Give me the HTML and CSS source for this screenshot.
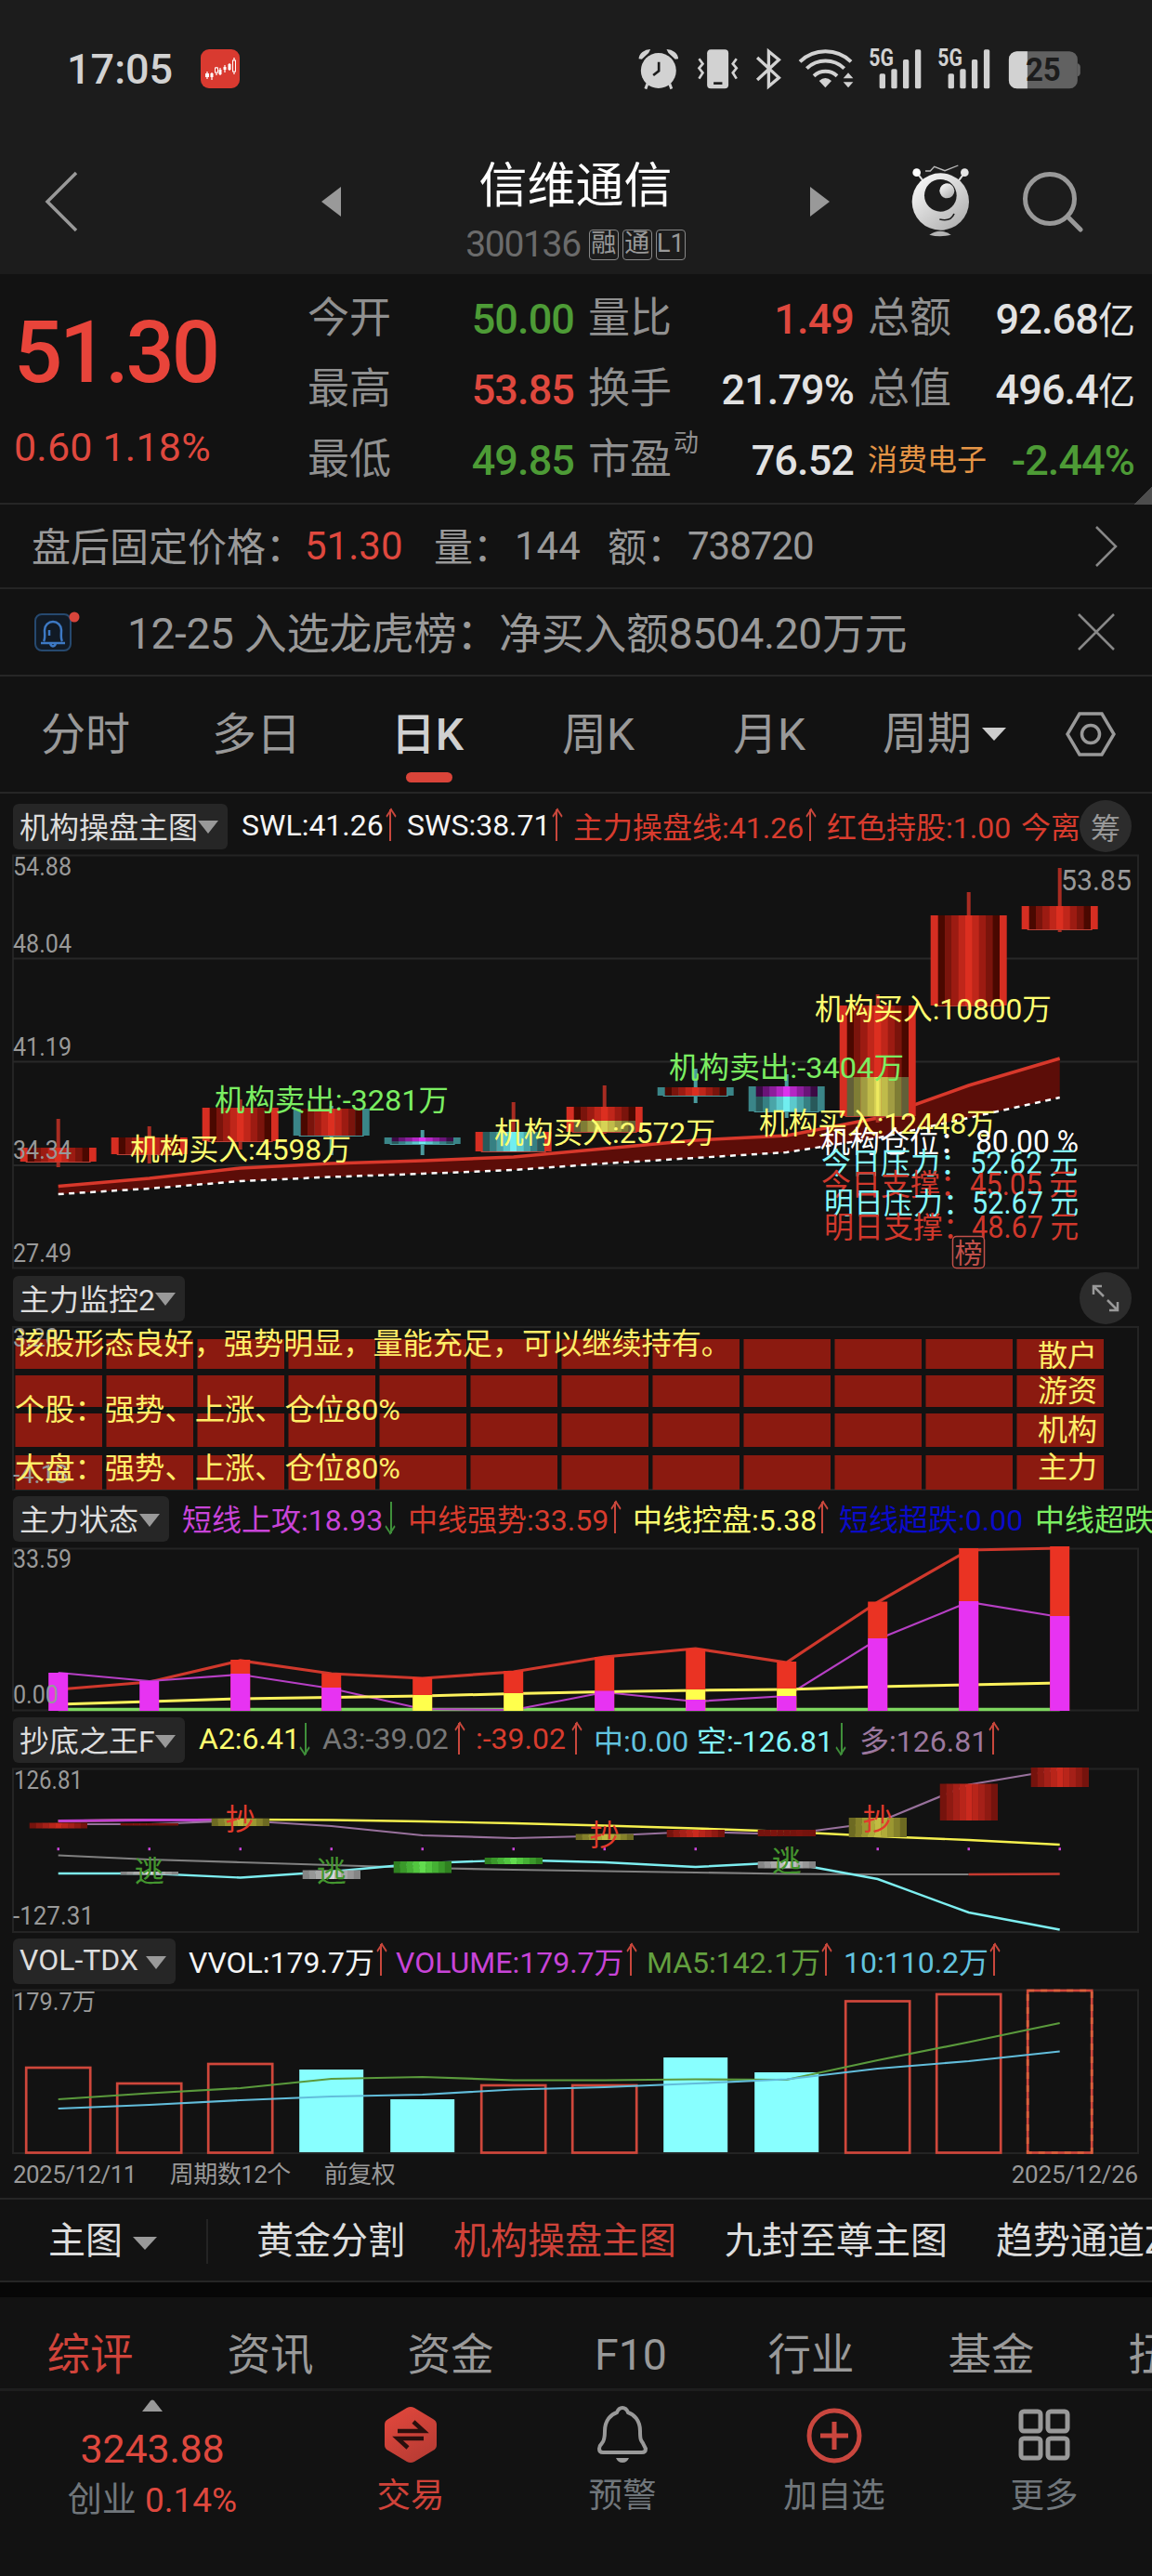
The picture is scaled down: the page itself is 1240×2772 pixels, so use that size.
FILE: index.html
```html
<!DOCTYPE html>
<html lang="zh-CN">
<head>
<meta charset="utf-8">
<title>信维通信 300136</title>
<link rel="stylesheet" href="styles.css">
</head>
<body>
<header class="top">
  <div class="status">
    <span class="clock">17:05</span>
    <svg class="app-badge" viewBox="0 0 42 42"><rect width="42" height="42" rx="9" fill="#d93a30"/><g stroke="#fff" stroke-width="1.2" fill="none"><path d="M7 24v8M12 25v8M17 19v9M21 20v8M26 17v8M31 15v8M36 9v18"/></g><g fill="#fff"><rect x="5" y="26" width="4" height="4"/><rect x="10.500" y="26" width="3" height="4"/><rect x="19.500" y="22" width="3" height="5"/><rect x="24.500" y="19" width="3" height="3"/><rect x="29.500" y="16" width="3" height="6"/></g><g fill="#d93a30" stroke="#fff" stroke-width="1"><rect x="15.500" y="20" width="3" height="5"/><rect x="34.500" y="12" width="3" height="12"/></g></svg>
    <svg class="status-icons" viewBox="0 20 1460 160" fill="#d2d2d2">
      <circle cx="86" cy="107" r="57"/><path d="M22 69a38 33 0 0 1 38-31l-6 12-22 20zM150 69a38 33 0 0 0-38-31l6 12 22 20z"/><path d="M50 150l-6 16M122 150l6 16" stroke="#d2d2d2" stroke-width="9"/><path d="M87 79v29l-18 14" fill="none" stroke="#1c1c1c" stroke-width="8"/>
      <rect x="243" y="39" width="69" height="126" rx="12"/><rect x="264" y="144" width="28" height="8" fill="#1c1c1c"/>
      <g fill="none" stroke="#d2d2d2" stroke-width="8"><path d="M217 69l12 16-12 14 12 15-12 19M338 69l-12 16 12 14-12 15 12 19"/><path d="M405 65l70 65-33 28V45l33 27-70 65" stroke-width="10"/></g>
      <g fill="none" stroke="#d2d2d2" stroke-width="12"><path d="M543 78a119 119 0 0 1 165 0M565 100a88 88 0 0 1 121 0M588 124a56 56 0 0 1 75 0"/></g>
      <path d="M625 162l-20-22q20-18 40 0zM683 132l16-18 16 18zM683 144h32l-16 18z"/>
      <g class="g5"><text x="766" y="91" textLength="80" lengthAdjust="spacingAndGlyphs">5G</text><text x="988" y="91" textLength="80" lengthAdjust="spacingAndGlyphs">5G</text></g>
      <g id="bars"><rect x="800" y="117" width="19" height="48" rx="5"/><rect x="838" y="102" width="19" height="63" rx="5"/><rect x="876" y="71" width="19" height="94" rx="5"/><rect x="915" y="39" width="19" height="126" rx="5"/></g>
      <use href="#bars" x="222"/>
      <rect x="1218" y="45" width="222" height="120" rx="26" fill="#616161"/><path d="M1278 45h-34a26 26 0 0 0-26 26v68a26 26 0 0 0 26 26h34z"/><path d="M1440 84q9 3 9 12v18q0 9-9 12z" fill="#616161"/><text class="bat" x="1272" y="141" textLength="114" lengthAdjust="spacingAndGlyphs">25</text>
    </svg>
  </div>
  <div class="titlebar">
    <svg class="back" viewBox="0 0 36 66"><path d="M34 2L3 33l31 31" fill="none" stroke="#999" stroke-width="3.500"/></svg>
    <svg class="prev" viewBox="0 0 21 32"><path d="M21 0v32L0 16z" fill="#999"/></svg>
    <div class="name">
      <h1>信维通信</h1>
      <p><span class="code">300136</span><i>融</i><i>通</i><i>L1</i></p>
    </div>
    <svg class="next" viewBox="0 0 21 32"><path d="M0 0v32l21-16z" fill="#999"/></svg>
    <svg class="robot" viewBox="900 410 200 240">
      <defs><linearGradient id="silver" x1="0" y1="0" x2=".8" y2="1"><stop offset="0" stop-color="#fff"/><stop offset="1" stop-color="#b0b0b0"/></linearGradient></defs>
      <path d="M928 445l18 24M1074 445l-18 24" stroke="#ddd" stroke-width="6"/><circle cx="923" cy="439" r="13" fill="#fff"/><circle cx="1078" cy="439" r="13" fill="#e4e4e4"/>
      <path d="M951 434h16l13-14 34 13 43-17" fill="none" stroke="#bbb" stroke-width="4"/>
      <circle cx="1000" cy="533" r="92" fill="url(#silver)"/><circle cx="1000" cy="513" r="52" fill="#1c1c1c"/><circle cx="1021" cy="498" r="24" fill="url(#silver)"/><path d="M997 590q36 9 47-18" fill="none" stroke="#1c1c1c" stroke-width="5"/><path d="M964 640q35-24 70 0-35 9-70 0z" fill="#b5b5b5"/>
    </svg>
    <svg class="search" viewBox="0 0 66 66" fill="none" stroke="#999" stroke-width="5"><circle cx="30" cy="30" r="26.500"/><path d="M49 49l14 14" stroke-linecap="round"/></svg>
  </div>
</header>

<section class="quote">
  <div class="price"><strong>51.30</strong><span>0.60 1.18%</span></div>
  <dl class="stats">
    <div><dt>今开</dt><dd class="down">50.00</dd></div><div><dt>量比</dt><dd class="up">1.49</dd></div><div><dt>总额</dt><dd>92.68<small>亿</small></dd></div>
    <div><dt>最高</dt><dd class="up">53.85</dd></div><div><dt>换手</dt><dd>21.79%</dd></div><div><dt>总值</dt><dd>496.4<small>亿</small></dd></div>
    <div><dt>最低</dt><dd class="down">49.85</dd></div><div><dt>市盈<sup>动</sup></dt><dd>76.52</dd></div><div><dt class="sector">消费电子</dt><dd class="down">-2.44%</dd></div>
  </dl>
  <b class="corner"></b>
</section>

<section class="after">
  <span>盘后固定价格：</span><span class="up a1">51.30</span><span class="a2">量：</span><span class="a3">144</span><span class="a4">额：</span><span class="a5">738720</span>
  <svg class="chev" viewBox="0 0 26 46"><path d="M2 2l21 21L2 44" fill="none" stroke="#888" stroke-width="2.500"/></svg>
</section>
<section class="notice">
  <svg class="bell" viewBox="0 0 50 44"><rect x="1" y="3" width="38" height="39" rx="7" fill="#111a25" stroke="#26496f" stroke-width="2"/><path d="M7 34h26M10 32c2-3 1-8 1-12a9 9 0 0 1 18 0c0 4-1 9 1 12M17 35q3 5 6 0M16 26v-6" fill="none" stroke="#3d79c4" stroke-width="2.500"/><circle cx="43" cy="6" r="5.500" fill="#d9453b"/></svg>
  <span>12-25 入选龙虎榜：净买入额8504.20万元</span>
  <svg class="close" viewBox="0 0 40 40"><path d="M1 1l38 38M39 1L1 39" stroke="#888" stroke-width="2.500"/></svg>
</section>

<nav class="periods">
  <span>分时</span><span>多日</span><span class="on">日K</span><span>周K</span><span>月K</span><span>周期<svg class="tri" viewBox="0 0 26 14"><path d="M0 0h26L13 14z" fill="#ccc"/></svg></span>
  <svg class="hex" viewBox="0 0 54 48" fill="none" stroke="#999" stroke-width="3.500"><path d="M15 2h24l13 22-13 22H15L2 24z"/><circle cx="27" cy="24" r="9.500"/></svg>
</nav>

<main class="charts">
  <div class="legend l1">
    <button>机构操盘主图<i></i></button>
    <span class="white">SWL:41.26<u></u></span><span class="white">SWS:38.71<u></u></span><span class="red">主力操盘线:41.26<u></u></span><span class="red">红色持股:1.00</span><span class="red">今离</span>
    <b class="round">筹</b>
  </div>
  <svg class="chart" id="c1" viewBox="0 914 1240 458" height="458"></svg>
  <div class="legend l2">
    <button>主力监控2<i></i></button>
    <b class="round"><svg viewBox="0 0 30 30" fill="none" stroke="#999" stroke-width="2.500"><path d="M13 13L2 2M2 11V2h9M17 17l11 11M28 19v9h-9"/></svg></b>
  </div>
  <svg class="chart" id="c2" viewBox="0 1422 1240 187" height="187"></svg>
  <div class="legend l3">
    <button>主力状态<i></i></button>
    <span class="mag">短线上攻:18.93<u class="dn"></u></span><span class="red">中线强势:33.59<u></u></span><span class="yel">中线控盘:5.38<u></u></span><span class="blu">短线超跌:0.00</span><span class="grn">中线超跌</span>
  </div>
  <svg class="chart" id="c3" viewBox="0 1660 1240 187" height="187"></svg>
  <div class="legend l4">
    <button>抄底之王F<i></i></button>
    <span class="yel">A2:6.41<u class="dn"></u></span><span class="gry">A3:-39.02<u></u></span><span class="red">:-39.02<u></u></span><span class="sky">中:0.00</span><span class="cya">空:-126.81<u class="dn"></u></span><span class="pur">多:126.81<u></u></span>
  </div>
  <svg class="chart" id="c4" viewBox="0 1898 1240 187" height="187"></svg>
  <div class="legend l5">
    <button>VOL-TDX<i></i></button>
    <span class="white">VVOL:179.7万<u></u></span><span class="mag">VOLUME:179.7万<u></u></span><span class="olv">MA5:142.1万<u></u></span><span class="sky">10:110.2万<u></u></span>
  </div>
  <svg class="chart" id="c5" viewBox="0 2136 1240 184" height="184"></svg>
  <div class="dates"><span>2025/12/11</span><span>周期数12个</span><span>前复权</span><span class="last">2025/12/26</span></div>
</main>

<nav class="formulas">
  <span class="pick">主图<svg class="tri" viewBox="0 0 26 14"><path d="M0 0h26L13 14z" fill="#999"/></svg></span>
  <span>黄金分割</span><span class="on">机构操盘主图</span><span>九封至尊主图</span><span>趋势通道Z</span>
</nav>
<nav class="infos"><span class="on">综评</span><span>资讯</span><span>资金</span><span>F10</span><span>行业</span><span>基金</span><span>扭亏</span></nav>

<footer class="dock">
  <div class="index"><svg viewBox="0 0 22 13"><path d="M0 13L9 1.500q2-2 4 0L22 13z" fill="#999"/></svg><strong>3243.88</strong><p>创业 <em>0.14%</em></p></div>
  <div class="trade"><svg viewBox="0 0 56 62"><defs><linearGradient id="hexred" x1="0" y1="0" x2=".6" y2="1"><stop offset="0" stop-color="#e5483d"/><stop offset="1" stop-color="#b93c34"/></linearGradient></defs><path d="M28 1q2 0 4 1l20 12q4 2 4 6v22q0 4-4 6L32 60q-4 2-8 0L4 48q-4-2-4-6V20q0-4 4-6L24 2q2-1 4-1z" fill="url(#hexred)"/><path d="M14 27h28L31 17M42 35H14l11 10" fill="none" stroke="#2a0f0d" stroke-width="4.500"/></svg><span>交易</span></div>
  <div><svg viewBox="0 0 56 62" fill="none" stroke="#999" stroke-width="4"><path d="M7 50q-4 0-4-4 0-3 3-6 3-3 3-13C9 15 16 9 22 7q2-5 6-5t6 5c6 2 13 8 13 20 0 10 1 10 3 13t3 6q0 4-4 4z"/><path d="M21 56h14q-2 5-7 5t-7-5z" fill="#999" stroke="none"/></svg><span>预警</span></div>
  <div><svg viewBox="0 0 60 62" fill="none" stroke="#c9463e" stroke-width="5"><circle cx="30" cy="32" r="27"/><path d="M30 17v30M15 32h30"/></svg><span>加自选</span></div>
  <div><svg viewBox="0 0 56 62" fill="none" stroke="#999" stroke-width="5"><rect x="3" y="6" width="21" height="21" rx="3"/><rect x="32" y="6" width="21" height="21" rx="3"/><rect x="3" y="35" width="21" height="21" rx="3"/><rect x="32" y="35" width="21" height="21" rx="3"/></svg><span>更多</span></div>
</footer>
<script src="chart.js"></script>
</body>
</html>
```
FILE: styles.css
```css
* { box-sizing: border-box; margin: 0; padding: 0; }
body { width: 1240px; height: 2772px; overflow: hidden; background: #121212; color: #999; font-family: Roboto, "Noto Sans CJK SC", sans-serif; font-weight: 400; }
svg { display: block; flex: none; }
i, em { font-style: normal; }
u { text-decoration: none; }
span { white-space: nowrap; }
.up { color: #df483e !important; }
.down { color: #4d9b36 !important; }

.top { height: 295px; background: #1c1c1c; }
.status { height: 148px; padding-left: 72px; display: flex; align-items: center; }
.clock { font-size: 45px; font-weight: 500; color: #d2d2d2; width: 144px; letter-spacing: 0; }
.app-badge { width: 42px; height: 42px; }
.status-icons { width: 486.7px; height: 53.3px; margin-left: 422px; }
.g5 { font: 700 76px Roboto; }
.bat { font: 700 104px Roboto; fill: #1c1c1c; }
.titlebar { height: 147px; display: flex; align-items: flex-start; }
.back { width: 36px; height: 66px; margin: 36px 262px 0 48px; }
.prev, .next { width: 21px; height: 32px; margin-top: 53px; }
.name { width: 505px; text-align: center; }
h1 { font-size: 52px; line-height: 60px; font-weight: 400; color: #fff; margin-top: 23px; }
.name p { display: flex; justify-content: center; align-items: center; gap: 4px; height: 34px; margin-top: 15px; }
.code { font-size: 39px; letter-spacing: -1.3px; color: #6b6b6b; margin-right: 5px; }
.name i { width: 32px; height: 33px; border: 1.5px solid #888; border-radius: 4px; font-size: 27px; line-height: 29px; text-align: center; color: #999; }
.robot { width: 66.7px; height: 80px; margin: 28px 0 0 86px; }
.search { width: 66px; height: 66px; margin: 36px 0 0 54px; }

.quote { height: 248px; padding: 9px 18px 0 15px; border-bottom: 2px solid #262626; display: flex; position: relative; }
.price { width: 317px; color: #e8443a; }
.price strong { display: block; font-size: 92px; font-weight: 500; line-height: 100px; margin-top: 26px; letter-spacing: -3.2px; }
.price span { display: block; font-size: 43px; line-height: 50px; margin-top: 26px; color: #df483e; letter-spacing: .2px; }
.stats { flex: 1; display: grid; grid-template-columns: 286px 285px 286px; column-gap: 16px; grid-auto-rows: 76px; }
.stats div { display: flex; justify-content: space-between; align-items: center; }
dt { font-size: 45px; line-height: 70px; padding-top: 1px; white-space: nowrap; color: #909090; margin-left: -1px; }
sup { font-size: 27px; line-height: 20px; vertical-align: 24px; margin-left: 2px; }
dd { font-size: 45px; line-height: 70px; padding-top: 3px; letter-spacing: -.9px; color: #e2e2e2; font-weight: 500; white-space: nowrap; }
dd small { font-size: 40px; font-weight: 400; line-height: 1; }
.sector { font-size: 32px; color: #e59546; padding-top: 2px; }
.corner { position: absolute; right: 0; bottom: -2px; background: linear-gradient(135deg, transparent 50%, #4d4d4d 50%); width: 19px; height: 20px; }

.after { height: 91px; border-bottom: 2px solid #242424; padding: 0 36px 0 34px; display: flex; align-items: center; font-size: 42px; }
.after span { padding-bottom: 4px; }
.after .a1, .after .a3, .after .a5 { padding-bottom: 0; }
.a1 { width: 139px; }
.a2 { width: 87px; }
.a3 { width: 100px; }
.a4 { width: 86px; }
.a5 { letter-spacing: -1px; }
.chev { width: 26px; height: 46px; margin-left: auto; }
.notice { height: 94px; border-bottom: 2px solid #262626; padding: 0 40px 0 37px; display: flex; align-items: center; font-size: 46px; }
.notice span { letter-spacing: -.3px; padding-bottom: 5px; }
.bell { width: 50px; height: 44px; margin-right: 50px; }
.close { width: 40px; height: 40px; margin-left: auto; }

.periods { height: 126px; border-bottom: 2px solid #262626; display: flex; align-items: center; font-size: 48px; padding-left: 0; }
.periods span { width: 184px; height: 124px; line-height: 126px; text-align: center; position: relative; }
.periods span:nth-child(6) { width: 193px; display: flex; align-items: center; justify-content: center; gap: 11px; }
.periods .on { color: #d0d0d0; font-weight: 500; }
.periods .on::after { content: ""; position: absolute; left: 69px; bottom: 10px; width: 50px; height: 11px; border-radius: 6px; background: #d94439; }
.tri { width: 26px; height: 14px; }
.hex { width: 54px; height: 48px; margin-left: 34px; }

.charts { height: 1513px; border-bottom: 2px solid #262626; }
.legend { padding-left: 14px; display: flex; align-items: center; height: 51px; font-size: 32px; position: relative; overflow: hidden; }
.legend button { height: 49px; border: 0; border-radius: 6px; background: #262626; color: #ddd; font: 400 32px Roboto, "Noto Sans CJK SC", sans-serif; display: flex; justify-content: space-between; align-items: center; padding: 0 10px 3px 7px; white-space: nowrap; flex: none; }
.legend button i { border: 11px solid transparent; border-top: 14px solid #999; border-bottom: 0; margin: 5px 0 0 -4px; }
.legend span { display: flex; justify-content: space-between; align-items: center; flex: none; padding-bottom: 3px; }
.legend u { width: 12px; height: 34px; background: linear-gradient(currentColor, currentColor) 50% / 2px 100% no-repeat; color: #c9473c; position: relative; flex: none; }
.legend u::before { content: ""; position: absolute; left: 2px; top: 2px; width: 8px; height: 8px; border: solid; border-width: 2px 0 0 2px; transform: rotate(45deg) skew(12deg, 12deg); }
.legend u.dn { color: #3f8f3a; transform: rotate(180deg); }
.round { margin-left: auto; margin-right: 22px; width: 56px; height: 56px; border-radius: 50%; background: #2c2c2c; font-size: 32px; font-weight: 400; color: #999; display: flex; align-items: center; justify-content: center; flex: none; }
.round svg { width: 30px; height: 30px; }
.l1 { height: 60px; padding-bottom: 0; padding-top: 10px; overflow: visible; }
.l1 button { width: 231px; margin-right: 15px; }
.l1 span:nth-of-type(1) { width: 166px; margin-right: 12px; }
.l1 span:nth-of-type(2) { width: 167px; margin-right: 12px; }
.l1 span:nth-of-type(3) { width: 261px; margin-right: 12px; }
.l1 span:nth-of-type(4) { width: 209px; }
.l1 span:nth-of-type(5) { width: 62px; }
.l2 { height: 50px; overflow: visible; }
.l2 button { width: 185px; }
.l3 button { width: 168px; margin-right: 14px; }
.l3 span:nth-of-type(1) { width: 231px; margin-right: 12px; }
.l3 span:nth-of-type(2) { width: 229px; margin-right: 13px; }
.l3 span:nth-of-type(3) { width: 210px; margin-right: 12px; }
.l3 span:nth-of-type(4) { width: 211px; }
.l4 button { width: 185px; margin-right: 15px; }
.l4 span:nth-of-type(1) { width: 121px; margin-right: 12px; }
.l4 span:nth-of-type(2) { width: 153px; margin-right: 12px; }
.l4 span:nth-of-type(3) { width: 114px; margin-right: 13px; }
.l4 span:nth-of-type(4) { width: 111px; }
.l4 span:nth-of-type(5) { width: 162px; margin-right: 13px; }
.l4 span:nth-of-type(6) { width: 148px; }
.l5 button { width: 175px; margin-right: 14px; }
.l5 span:nth-of-type(1) { width: 213px; margin-right: 10px; }
.l5 span:nth-of-type(2) { width: 259px; margin-right: 11px; }
.l5 span:nth-of-type(3) { width: 199px; margin-right: 13px; }
.l5 span:nth-of-type(4) { width: 165px; }
.white { color: #f5f5f5; }
.red { color: #d83c2e; }
.mag { color: #c844d8; }
.yel { color: #ffff70; }
.blu { color: #0b0bc8; }
.grn { color: #7bee62; }
.gry { color: #777; }
.sky { color: #62c3df; }
.cya { color: #84f8fb; }
.pur { color: #9c789f; }
.olv { color: #63a03f; }
.chart { width: 1240px; font-family: Roboto, "Noto Sans CJK SC", sans-serif; }
.dates { display: flex; gap: 36px; padding: 0 15px 0 14px; height: 43px; line-height: 41px; font-size: 26px; letter-spacing: -.55px; }
.last { margin-left: auto; letter-spacing: -.2px; }

.formulas { height: 89px; border-bottom: 2px solid #262626; display: flex; align-items: center; font-size: 40px; line-height: 48px; color: #ddd; gap: 52px; overflow: hidden; padding-top: 3px; }
.formulas .pick { width: 224px; height: 48px; border-right: 2px solid #242424; padding-left: 52px; display: flex; align-items: center; gap: 11px; flex: none; }
.formulas .pick .tri { margin-top: 4px; }
.formulas .on { color: #cf4239; }
.infos { height: 117px; border-top: 16px solid #070707; border-bottom: 3px solid #1e1e1e; display: flex; align-items: center; font-size: 46.500px; line-height: 98px; overflow: hidden; }
.infos span { width: 194px; flex: none; text-align: center; padding-top: 25px; }
.infos .on { color: #d1443b; }

.dock { display: flex; height: 199px; }
.dock div { width: 228px; display: flex; flex-direction: column; align-items: center; padding-top: 16px; font-size: 36.500px; color: #70767b; }
.dock div:nth-child(5) { width: 224px; }
.dock .index { width: 328px; padding-top: 9px; }
.dock .index svg { width: 22px; height: 13px; }
.index strong { font-size: 43px; font-weight: 400; color: #df483e; line-height: 50px; margin-top: 15px; letter-spacing: -.2px; }
.index p { font-size: 37px; line-height: 44px; margin-top: 9px; }
.index em { color: #df483e; }
.dock .trade { width: 228px; color: #cf4239; }
.dock div:not(.index) svg { height: 62px; }
.dock div:not(.index) span { line-height: 44px; margin-top: 13px; }
```
FILE: chart.js
```js
const NS = 'http://www.w3.org/2000/svg';
const X = i => 62.7 + 98 * i;

const PALETTE = {
  red: ['#4a0800', '#7a140c', '#9c1b12', '#bf261a', '#dc2f20'],
  purple: ['#3c0a44', '#6a1478', '#8d1d9c', '#b427c4', '#dd33ee'],
  cyan: ['#28595a', '#368083', '#4aa5a8', '#5cc9cc', '#70eef0'],
  yellow: ['#625f38', '#7f7d35', '#a19c42', '#c0bb4a', '#d6d355'],
  boxred: ['#75130d', '#8f1a12', '#a52018', '#b8251a', '#cb2a1e'],
  olive: ['#6d6a22', '#85812a', '#9b9731', '#b0ab39', '#c2bc42'],
  silver: ['#858585', '#979797', '#a9a9a9', '#bdbdbd', '#d8d8d8'],
  green: ['#2f8020', '#3a992a', '#45b034', '#52c63f', '#62dc4e'],
  dark: ['#75130d', '#75130d', '#7c140e', '#75130d', '#75130d']
};

function make(svg) {
  const add = (tag, attrs, text) => {
    const n = document.createElementNS(NS, tag);
    for (const k in attrs) n.setAttribute(k, attrs[k]);
    if (text) n.textContent = text;
    svg.appendChild(n);
    return n;
  };
  return {
    add,
    rect: (x, y, w, h, fill) => add('rect', { x, y, width: w, height: h, fill }),
    line: (x1, y1, x2, y2, stroke, w = 2) => add('line', { x1, y1, x2, y2, stroke, 'stroke-width': w }),
    path: (ys, stroke, w, from = 0, extra = {}) => add('polyline', Object.assign({ points: ys.map((y, i) => X(i + from) + ',' + y).join(' '), fill: 'none', stroke, 'stroke-width': w }, extra)),
    text: (x, y, s, fill, len, size = 32, extra = {}) => add('text', Object.assign({ x, y, fill, 'font-size': size }, len ? { textLength: len, lengthAdjust: 'spacingAndGlyphs' } : {}, extra), s),
    frame: (y1, y2) => add('rect', { x: 14, y: y1, width: 1211, height: y2 - y1, fill: 'none', stroke: '#242424', 'stroke-width': 2 }),
    shaded: (cx, half, y, h, name) => {
      const p = PALETTE[name], steps = p.concat(p.slice(0, 4).reverse()), w = half * 2 / steps.length;
      steps.forEach((c, k) => add('rect', { x: cx - half + k * w, y, width: w + .3, height: h, fill: c }));
    }
  };
}

/* price panel */
{
  const g = make(document.getElementById('c1'));
  g.frame(920.5, 1364.500);
  [1031.5, 1142.5, 1254].forEach(y => g.line(14, y, 1225, y, '#282828'));
  const top = [1276.5, 1268, 1257, 1252, 1249, 1245, 1236, 1227, 1222, 1203, 1168, 1139];
  const low = [1285, 1279, 1271, 1266.5, 1263, 1259, 1252, 1246, 1240, 1224.5, 1203, 1181];
  const pts = top.map((y, i) => X(i) + ',' + y).concat(low.map((y, i) => X(i) + ',' + y).reverse());
  g.add('polygon', { points: pts.join(' '), fill: '#5c0d08' });
  g.path(top, '#d8382b', 3.5);
  g.path(low, '#fff', 2.5, 0, { 'stroke-dasharray': '6 5.500' });
  const R = '#d62e22', T = '#3a8588';
  const candles = [
    [R, 1204, 1256, [[1235, 1250, 'red']]],
    [R, 1212, 1252, [[1224, 1242, 'red']]],
    [R, 1183, 1237, [[1192, 1228, 'red']]],
    [T, 1190, 1243, [[1193, 1222, 'red']]],
    [T, 1216, 1243, [[1224, 1228.5, 'purple'], [1228.5, 1231, 'cyan']]],
    [R, 1186, 1240, [[1218, 1239, 'cyan']]],
    [R, 1168, 1220, [[1191, 1206, 'red'], [1206, 1218, 'yellow']]],
    [T, 1150, 1187, [[1170, 1179, 'red']]],
    [T, 1156, 1203, [[1169, 1180, 'purple'], [1180, 1196, 'cyan']]],
    [R, 1070, 1208, [[1082, 1159, 'red'], [1159, 1201, 'yellow']]],
    [R, 960, 1087, [[985, 1082, 'red']]],
    [R, 934, 1003, [[975, 1000, 'red']]]
  ];
  candles.forEach(([c, hi, lo, parts], i) => {
    const x = X(i), y1 = parts[0][0], y2 = parts[parts.length - 1][1];
    g.line(x, hi, x, y1, c === R ? '#a82c22' : '#4a9a9d', 4);
    g.line(x, y2, x, lo, c === R ? '#a82c22' : '#4a9a9d', 4);
    g.rect(x - 41, y1, 82, y2 - y1, c);
    parts.forEach(([a, b, n]) => g.shaded(x, 33, a, b - a, n));
    g.line(x - 35, y2 + .5, x + 35, y2 + .5, c === R ? '#b84238' : '#4a9a9d', 1);
  });
  g.line(X(9), 1159, X(9), 1201, '#eeea60', 3);
  [['54.88', 942], ['48.04', 1025], ['41.19', 1136], ['34.34', 1247], ['27.49', 1358]].forEach(([s, y]) => g.text(14, y, s, '#999', 63, 27));
  g.text(1142, 958, '53.85', '#999', 76, 32);
  const Y = '#ffff70', G = '#7bee62', C = '#84f8fb', D = '#d0382c';
  g.text(140, 1248, '机构买入:4598万', Y, 238);
  g.text(231, 1195, '机构卖出:-3281万', G, 252);
  g.text(532, 1230, '机构买入:2572万', Y, 238);
  g.text(720, 1160, '机构卖出:-3404万', G, 253);
  g.text(877, 1097, '机构买入:10800万', Y, 255);
  g.text(817, 1220, '机构买入:12448万', Y, 255);
  [['机构仓位：', '80.00 %', '#fff', 883, 1050, 111, 1240], ['今日压力：', '52.62 元', C, 884, 1044, 116, 1263], ['今日支撑：', '45.05 元', D, 884, 1044, 116, 1286], ['明日压力：', '52.67 元', C, 887, 1046, 115, 1306], ['明日支撑：', '48.67 元', D, 887, 1046, 115, 1332]].forEach(([a, b, c, x1, x2, w, y]) => {
    g.text(x1, y, a, c, 160); g.text(x2, y, b, c, w, 33);
  });
  g.add('rect', { x: 1025.5, y: 1330.5, width: 34, height: 34, rx: 4, fill: '#121212', stroke: '#c0504a', 'stroke-width': 1.5 });
  g.text(1027.5, 1359, '榜', '#c0504a', 30, 30);
}

/* position heat grid */
{
  const g = make(document.getElementById('c2'));
  g.frame(1428, 1603);
  [[1441, 32], [1480, 34], [1521, 36], [1566, 37]].forEach(([y, h]) => {
    for (let i = 0; i < 12; i++) g.rect(16.5 + 98 * i, y, 93.5, h, '#8b1a10');
  });
  const Y = '#ffee68';
  g.text(14, 1449, '3.20', '#999', 49, 27);
  g.text(14, 1596, '-4.18', '#999', 60, 27);
  g.text(16, 1457, '该股形态良好，强势明显，量能充足，可以继续持有。', Y, 771);
  g.text(16, 1528, '个股：强势、上涨、仓位80%', Y, 415);
  g.text(16, 1591, '大盘：强势、上涨、仓位80%', Y, 415);
  [['散户', 1470], ['游资', 1508], ['机构', 1550], ['主力', 1590]].forEach(([s, y]) => g.text(1117, y, s, Y, 64));
}

/* momentum bars */
{
  const g = make(document.getElementById('c3'));
  g.frame(1666.5, 1840.5);
  g.path(Array(12).fill(1839.5), '#7fd860', 3.5);
  g.path([1818, 1810, 1787, 1801, 1806, 1799, 1783, 1774, 1789, 1724, 1668, 1666], '#d0382c', 3.2);
  g.path([1800, 1809, 1802, 1817, 1839, 1840, 1821, 1831, 1825, 1764, 1724, 1740], '#b63fc4', 2.2);
  g.path([1834, 1831, 1828, 1826.5, 1825, 1822.5, 1820.5, 1819, 1818, 1815, 1813, 1811], '#fdf25c', 3);
  const R = '#ea3323', M = '#e733f2', Y = '#ffff4c';
  [[[1800, M]], [[1809, M]], [[1786, R], [1801, M]], [[1801, R], [1816, M]], [[1805, R], [1824, Y]], [[1798, R], [1822, Y]], [[1783, R], [1819.5, M]], [[1774, R], [1818, Y], [1829, M]], [[1788, R], [1817, Y], [1825, M]], [[1723.5, R], [1763, M]], [[1666, R], [1723, M]], [[1664, R], [1739, M]]].forEach((parts, i) =>
    parts.forEach(([y, c]) => g.rect(X(i) - 10.5, y, 21, 1841 - y, c)));
  g.text(14, 1833, '0.00', '#999', 49, 27);
  g.text(14, 1687, '33.59', '#999', 63, 27);
}

/* bottom-fishing oscillator */
{
  const g = make(document.getElementById('c4'));
  g.frame(1903.5, 2079);
  g.path([1959.5, 1958.5, 1958, 1958.5, 1960, 1962, 1964.5, 1967.5, 1971, 1976, 1980, 1985], '#f5f04e', 2.4);
  g.path([1959.5, 1958.5, 1958.5], '#c03fd0', 3.2);
  g.path([1996.5, 2001, 2004, 2007, 2010, 2012, 2013.5, 2015, 2016.5, 2017, 2017], '#808080', 2.2);
  g.path([2017, 2016.5], '#c53a30', 2.6, 10);
  g.path([1963, 1963, 1959, 1965, 1975, 1978, 1975.5, 1971, 1974, 1961, 1920.5, 1904], '#98719c', 2.2);
  g.path([2016, 2016, 2020.5, 2014, 2005, 2001.5, 2004, 2009, 2004, 2022, 2058, 2076.5], '#7deef0', 2.4);
  for (let i = 0; i < 12; i++) g.rect(X(i) - 1.2, 1988.2, 2.5, 3, '#c844d8');
  [[0, 1961.5, 1967.5, 'boxred'], [1, 1962, 1964.5, 'dark'], [2, 1957, 1965, 'olive'], [6, 1973.5, 1980, 'olive'], [7, 1969, 1977, 'boxred'], [8, 1969, 1976, 'dark'], [9, 1956, 1977, 'olive'], [10, 1919.5, 1959, 'boxred'], [11, 1902, 1923, 'boxred'], [1, 2014, 2017.5, 'silver'], [3, 2012.5, 2022, 'silver'], [8, 2003, 2010.5, 'silver'], [4, 2003, 2015.5, 'green'], [5, 1999, 2006, 'green']].forEach(([i, a, b, n]) => g.shaded(X(i), 31, a, b - a, n));
  [[2, 1969], [6, 1986], [9, 1969]].forEach(([i, y]) => g.text(X(i) - 16, y, '抄', '#e23a2c', 32));
  [[1, 2025], [3, 2025], [8, 2014]].forEach(([i, y]) => g.text(X(i) - 16, y, '逃', '#44962f', 32));
  g.text(15, 1925, '126.81', '#999', 74, 27);
  g.text(14, 2071, '-127.31', '#999', 87, 27);
}

/* volume */
{
  const g = make(document.getElementById('c5'));
  g.frame(2141.5, 2317);
  [[2224], [2241], [2220], [2227, 1], [2259, 1], [2243], [2243], [2214, 1], [2230, 1], [2152.5], [2145], [2141, 2]].forEach(([y, k], i) => {
    if (k === 1) { g.rect(X(i) - 34.5, y, 69, 2316 - y, '#88ffff'); return; }
    g.add('rect', { x: X(i) - 34.5, y: y + 1, width: 69, height: 2315.5 - y, fill: 'none', stroke: '#cf473b', 'stroke-width': 2.7 });
    if (k === 2) g.add('rect', { x: X(i) - 34.5, y: y + 1, width: 69, height: 2315.5 - y, fill: 'none', stroke: '#d9603c', 'stroke-width': 2.7, 'stroke-dasharray': '7 7' });
  });
  g.path([2259, 2252.5, 2247, 2237, 2235, 2238.5, 2238.5, 2237.5, 2238, 2217, 2197.5, 2177], '#5a9a3c', 2.2);
  g.path([2269, 2265, 2260, 2256, 2254, 2248.5, 2246, 2242, 2237.5, 2226, 2218, 2207.5], '#62bddb', 2.2);
  g.text(14, 2163, '179.7万', '#999', 89, 26);
}
```
